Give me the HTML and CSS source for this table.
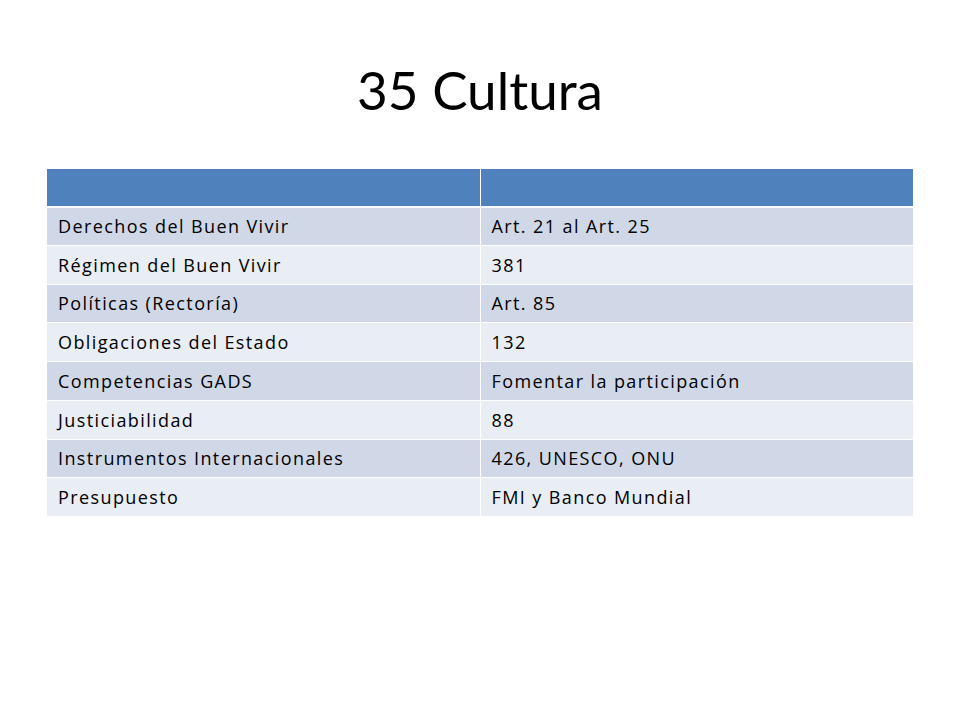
FILE: index.html
```html
<!DOCTYPE html>
<html lang="es">
<head>
<meta charset="utf-8">
<link rel="stylesheet" href="styles.css">
</head>
<body>
<div class="slide">
  <h1 class="title">35 Cultura</h1>
  <table class="grid">
    <colgroup><col class="c1"><col class="c2"></colgroup>
    <tr class="head"><th></th><th></th></tr>
    <tr class="odd"><td>Derechos del Buen Vivir</td><td>Art. 21 al Art. 25</td></tr>
    <tr class="even"><td>Régimen del Buen Vivir</td><td>381</td></tr>
    <tr class="odd"><td>Políticas (Rectoría)</td><td>Art. 85</td></tr>
    <tr class="even"><td>Obligaciones del Estado</td><td>132</td></tr>
    <tr class="odd"><td>Competencias GADS</td><td>Fomentar la participación</td></tr>
    <tr class="even"><td>Justiciabilidad</td><td>88</td></tr>
    <tr class="odd"><td>Instrumentos Internacionales</td><td>426, UNESCO, ONU</td></tr>
    <tr class="even"><td>Presupuesto</td><td>FMI y Banco Mundial</td></tr>
  </table>
</div>
</body>
</html>
```
FILE: styles.css
```css
html, body { margin: 0; padding: 0; background: #fff; }
.slide { width: 960px; height: 720px; padding-top: 57px; box-sizing: border-box; font-family: Lato, "Open Sans", sans-serif; color: #000; }
.title { margin: 0; text-align: center; font-weight: 400; font-size: 53px; line-height: 66px; }
.grid { margin: 45px 0 0 47px; width: 866px; border-collapse: collapse; table-layout: fixed; }
.c1 { width: 433px; }
.c2 { width: 433px; }
.grid th, .grid td { border: 1px solid #fff; padding: 0 0 0 11px; text-align: left; font-family: "Open Sans", sans-serif; font-size: 18px; letter-spacing: 1.4px; font-weight: 400; height: 38.75px; box-sizing: border-box; }
.grid tr.head th { background: #4f81bd; height: 38px; border-bottom-width: 2px; }
.grid tr.odd td { background: #d0d8e8; }
.grid tr.even td { background: #e9edf4; }
.grid tr td:first-child, .grid tr th:first-child { border-left: none; }
.grid tr td:last-child, .grid tr th:last-child { border-right: none; }
```
